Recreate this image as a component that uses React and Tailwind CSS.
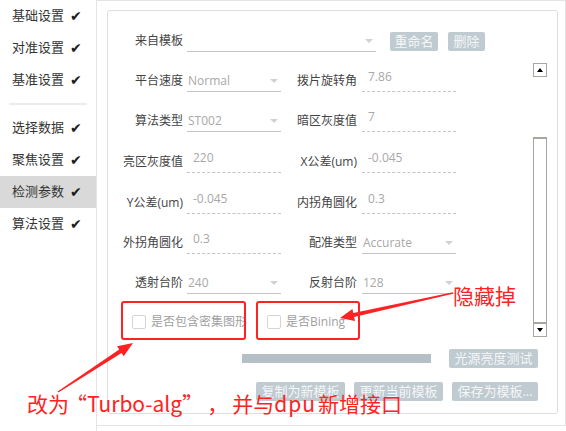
import React from 'react';

const navTop = ['基础设置', '对准设置', '基准设置'];
const navBottom = ['选择数据', '聚焦设置', '检测参数', '算法设置'];

const NavItem = ({ label, active }) => (
  <div className={`h-[32px] flex items-center pl-[12px] text-[13px] text-[#333] ${active ? 'bg-[#d9d9d9]' : ''}`}>
    <span>{label}</span>
    <span className="ml-[6px] text-[14px] font-['DejaVu_Sans',sans-serif] text-[#1a1a1a]">✔</span>
  </div>
);

const Arrow = () => (
  <span className="absolute right-[3px] top-[9px] w-0 h-0 border-l-[4px] border-r-[4px] border-t-[4px] border-l-transparent border-r-transparent border-t-[#d2d2d2]" />
);

const SelectBox = ({ value, w }) => (
  <div className={`relative ${w} h-[22px] border-b border-[#c4c4c4] flex items-center pl-[1px] text-[12px] text-[#a8a8a8]`}>
    {value}
    <Arrow />
  </div>
);

const TextBox = ({ value }) => (
  <div className="w-[94px] h-[22px] border-b border-dashed border-[#c4c4c4] pl-[6px] text-[12px] leading-[14px] text-[#a8a8a8]">
    {value}
  </div>
);

const Label = ({ children, w }) => (
  <div className={`${w} text-right text-[12px] text-[#444] shrink-0`}>{children}</div>
);

const Row = ({ l1, f1, l2, f2, extra }) => (
  <div className={`flex items-center h-[22px] ${extra || ''}`}>
    <Label w="w-[75px]">{l1}</Label>
    <div className="ml-[4px]">{f1}</div>
    <Label w="w-[76px]">{l2}</Label>
    <div className="ml-[5px]">{f2}</div>
  </div>
);

const Btn = ({ children, w }) => (
  <div className={`${w} h-[19px] rounded-[2px] bg-[#bfcad1] text-[#f4f6f8] text-[13px] leading-[19px] text-center`}>
    {children}
  </div>
);

const Check = ({ label, w }) => (
  <div className={`flex items-center ${w}`}>
    <span className="w-[14px] h-[14px] border border-[#d4d4d4] rounded-[2px] bg-white" />
    <span className="ml-[5px] text-[12px] text-[#a0a0a0]">{label}</span>
  </div>
);

export default function App() {
  return (
    <div className="relative w-[566px] h-[431px] bg-white overflow-hidden flex font-['Open_Sans','Noto_Sans_CJK_SC',sans-serif]">
      {/* side menu */}
      <div className="w-[97px] h-full border-r border-[#e4e4e4] shrink-0">
        {navTop.map((n) => <NavItem key={n} label={n} />)}
        <div className="h-[16px] flex items-center px-[9px]">
          <div className="w-full h-[2px] bg-[#ececec]" />
        </div>
        {navBottom.map((n) => <NavItem key={n} label={n} active={n === '检测参数'} />)}
      </div>

      {/* frame */}
      <div className="w-[469px] h-[426px] border-t border-r border-b border-[#e4e4e4] pt-[9px] pl-[10px] pr-[7px]">
        <div className="w-[451px] h-[404px] border border-[#dedede] rounded-[3px] flex flex-col">
          <div className="h-[326px] flex">
            <div className="flex-1 pt-[19px] flex flex-col gap-[18px]">
              <div className="flex items-center h-[22px]">
                <Label w="w-[75px]">来自模板</Label>
                <div className="ml-[4px]"><SelectBox value="" w="w-[189px]" /></div>
                <div className="ml-[14px]"><Btn w="w-[48px]">重命名</Btn></div>
                <div className="ml-[10px]"><Btn w="w-[37px]">删除</Btn></div>
              </div>
              <Row l1="平台速度" f1={<SelectBox value="Normal" w="w-[94px]" />} l2="拨片旋转角" f2={<TextBox value="7.86" />} />
              <Row l1="算法类型" f1={<SelectBox value="ST002" w="w-[94px]" />} l2="暗区灰度值" f2={<TextBox value="7" />} />
              <Row extra="mt-[1px]" l1="亮区灰度值" f1={<TextBox value="220" />} l2="X公差(um)" f2={<TextBox value="-0.045" />} />
              <Row extra="mt-[1px]" l1="Y公差(um)" f1={<TextBox value="-0.045" />} l2="内拐角圆化" f2={<TextBox value="0.3" />} />
              <Row l1="外拐角圆化" f1={<TextBox value="0.3" />} l2="配准类型" f2={<SelectBox value="Accurate" w="w-[94px]" />} />
              <Row l1="透射台阶" f1={<SelectBox value="240" w="w-[94px]" />} l2="反射台阶" f2={<SelectBox value="128" w="w-[94px]" />} />
              <div className="flex items-center h-[14px] pl-[24px] mt-[3px]">
                <Check label="是否包含密集图形" w="w-[135px]" />
                <Check label="是否Bining" w="" />
              </div>
            </div>

            {/* scrollbar */}
            <div className="w-[14px] mt-[52px] mr-[10px] flex flex-col">
              <div className="h-[14px] border border-[#a9a59f] flex items-center justify-center">
                <span className="w-0 h-0 border-l-[3px] border-r-[3px] border-b-[4px] border-l-transparent border-r-transparent border-b-black" />
              </div>
              <div className="h-[60px]" />
              <div className="h-[186px] border border-[#a9a59f] border-t-2" />
              <div className="h-[14px] border border-[#a9a59f] flex items-center justify-center">
                <span className="w-0 h-0 border-l-[3px] border-r-[3px] border-t-[4px] border-l-transparent border-r-transparent border-t-black" />
              </div>
            </div>
          </div>

          <div className="mt-[12px] h-[19px] flex items-center justify-end pr-[19px]">
            <div className="w-[189px] h-[9px] bg-[#b4c0c6]" />
            <div className="ml-[18px]"><Btn w="w-[89px]">光源亮度测试</Btn></div>
          </div>
          <div className="mt-[14px] flex justify-end gap-[9px] pr-[19px]">
            <Btn w="w-[89px]">复制为新模板</Btn>
            <Btn w="w-[89px]">更新当前模板</Btn>
            <Btn w="w-[86px]">保存为模板...</Btn>
          </div>
        </div>
      </div>

      {/* annotations */}
      <div className="absolute left-[121px] top-[301px] w-[125px] h-[39px] border-2 border-[#ff2222] rounded-[3px]" />
      <div className="absolute left-[256px] top-[301px] w-[104px] h-[39px] border-2 border-[#ff2222] rounded-[3px]" />
      <svg className="absolute left-0 top-0" width="566" height="431" viewBox="0 0 566 431">
        <polygon fill="#ff2222" points="340,318 355,320.9 354.1,317 453.1,293.8 452.9,292.2 353.3,313 352.4,309.1" />
        <polygon fill="#ff2222" points="133,343 123.7,356.2 121.6,353 58.4,392.6 57.6,391.4 119.2,349.4 117.1,346.2" />
      </svg>
      <div className="absolute left-[453px] top-[285px] text-[21px] leading-none text-[#ff2222] font-['Noto_Sans_CJK_SC',sans-serif]">隐藏掉</div>
      <div className="absolute left-[27px] top-[393px] flex text-[21px] leading-none text-[#ff2222] font-['Noto_Sans_CJK_SC',sans-serif] whitespace-nowrap">
        <span>改为</span>
        <span className="-ml-[3px]">“</span>
        <span>Turbo-alg</span>
        <span>”</span>
        <span className="ml-[4px]">，</span>
        <span className="ml-[4px]">并与</span>
        <span className="tracking-[1px]">dpu</span>
        <span className="ml-[2px]">新增接口</span>
      </div>
    </div>
  );
}
